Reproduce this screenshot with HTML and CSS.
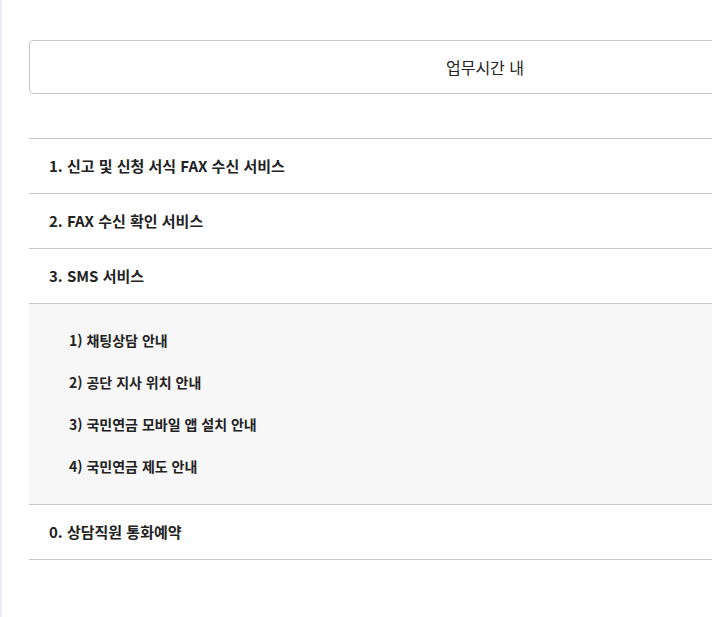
FILE: index.html
```html
<!DOCTYPE html>
<html lang="ko">
<head>
    <meta charset="utf-8">
    <title>업무시간 내</title>
    <link rel="stylesheet" href="styles.css">
</head>
<body>
    <div class="page">
        <div class="time-box">업무시간 내</div>

        <ul class="menu">
            <li class="menu-item">1. 신고 및 신청 서식 FAX 수신 서비스</li>
            <li class="menu-item">2. FAX 수신 확인 서비스</li>
            <li class="menu-item">3. SMS 서비스</li>
            <li class="sub-menu">
                <ul>
                    <li>1) 채팅상담 안내</li>
                    <li>2) 공단 지사 위치 안내</li>
                    <li>3) 국민연금 모바일 앱 설치 안내</li>
                    <li>4) 국민연금 제도 안내</li>
                </ul>
            </li>
            <li class="menu-item">0. 상담직원 통화예약</li>
        </ul>
    </div>
</body>
</html>
```

FILE: styles.css
```css
html, body {
    overflow: hidden;
}
body {
    margin: 0;
    font-family: "Noto Sans CJK KR", "Noto Sans", sans-serif;
    color: #222;
    background-color: #fff;
    border-left: 2px solid #e6ecf2;
    min-height: 617px;
    box-sizing: border-box;
}
.page {
    width: 912px;
    padding: 40px 0 0 27px;
}
.time-box {
    height: 52px;
    line-height: 52px;
    border: 1px solid #c8c8c8;
    border-radius: 4px;
    text-align: center;
    font-size: 16px;
    color: #222;
}
.menu {
    list-style: none;
    margin: 44px 0 0;
    padding: 0;
    border-top: 1px solid #c8c8c8;
}
.menu-item {
    height: 54px;
    line-height: 54px;
    padding-left: 20px;
    border-bottom: 1px solid #c8c8c8;
    font-size: 15px;
    font-weight: bold;
}
.sub-menu {
    background-color: #f7f7f7;
    border-bottom: 1px solid #c8c8c8;
}
.sub-menu ul {
    list-style: none;
    margin: 0;
    padding: 15px 0 17px 40px;
}
.sub-menu li {
    height: 42px;
    line-height: 42px;
    font-size: 14px;
    font-weight: bold;
}
```
